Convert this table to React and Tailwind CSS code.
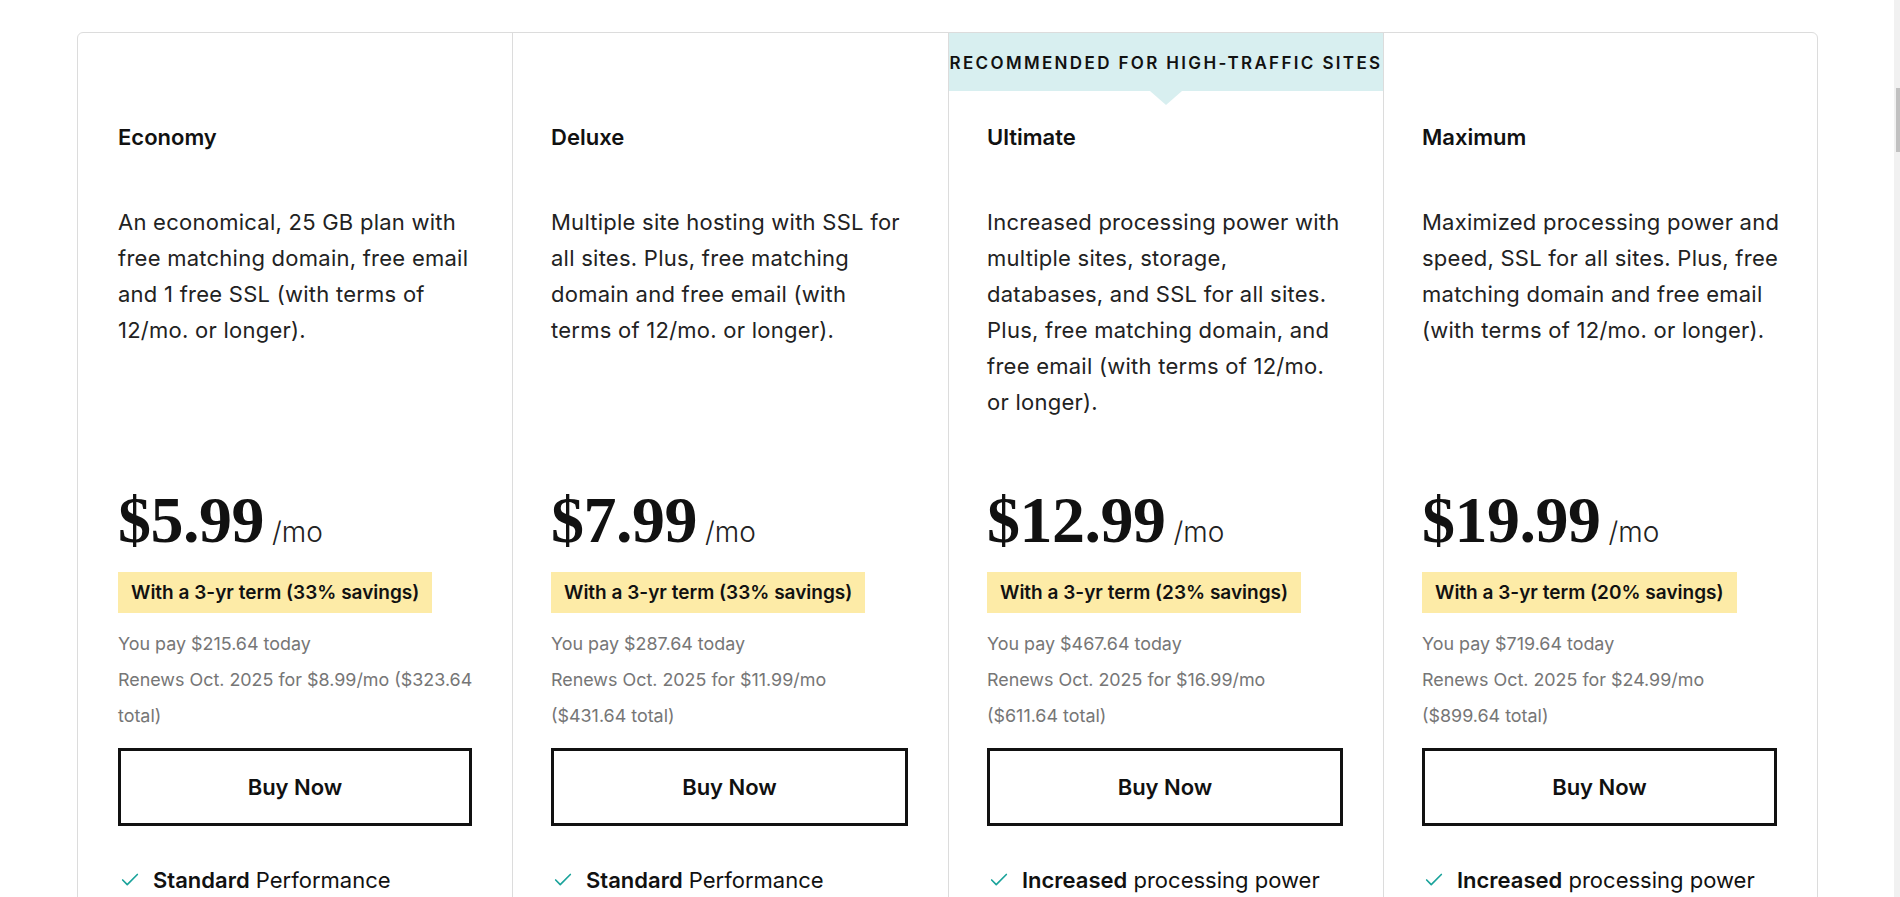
import React from "react";
import { Check } from "lucide-react";

const plans = [
  {
    name: "Economy",
    desc: ["An economical, 25 GB plan with", "free matching domain, free email", "and 1 free SSL (with terms of", "12/mo. or longer)."],
    price: "$5.99",
    savings: "With a 3-yr term (33% savings)",
    pay: "You pay $215.64 today",
    renew: ["Renews Oct. 2025 for $8.99/mo ($323.64", "total)"],
    featBold: "Standard",
    feat: "Performance",
  },
  {
    name: "Deluxe",
    desc: ["Multiple site hosting with SSL for", "all sites. Plus, free matching", "domain and free email (with", "terms of 12/mo. or longer)."],
    price: "$7.99",
    savings: "With a 3-yr term (33% savings)",
    pay: "You pay $287.64 today",
    renew: ["Renews Oct. 2025 for $11.99/mo", "($431.64 total)"],
    featBold: "Standard",
    feat: "Performance",
  },
  {
    name: "Ultimate",
    recommended: true,
    desc: ["Increased processing power with", "multiple sites, storage,", "databases, and SSL for all sites.", "Plus, free matching domain, and", "free email (with terms of 12/mo.", "or longer)."],
    price: "$12.99",
    savings: "With a 3-yr term (23% savings)",
    pay: "You pay $467.64 today",
    renew: ["Renews Oct. 2025 for $16.99/mo", "($611.64 total)"],
    featBold: "Increased",
    feat: "processing power",
  },
  {
    name: "Maximum",
    desc: ["Maximized processing power and", "speed, SSL for all sites. Plus, free", "matching domain and free email", "(with terms of 12/mo. or longer)."],
    price: "$19.99",
    savings: "With a 3-yr term (20% savings)",
    pay: "You pay $719.64 today",
    renew: ["Renews Oct. 2025 for $24.99/mo", "($899.64 total)"],
    featBold: "Increased",
    feat: "processing power",
  },
];

const sans = "font-['Inter','Noto_Sans',sans-serif]";

function Column({ plan, first }) {
  return (
    <div className={`min-w-0 flex flex-col ${first ? "" : "border-l border-[#dcdcdc]"}`}>
      <div className="relative h-[58px]">
        {plan.recommended && (
          <>
            <div className="h-full bg-[#d8eff0] flex items-center justify-center pt-[3px] text-[17px] font-semibold tracking-[2.35px] text-[#111] whitespace-nowrap overflow-visible">
              RECOMMENDED FOR HIGH-TRAFFIC SITES
            </div>
            <div className="absolute left-1/2 -translate-x-1/2 top-full w-0 h-0 border-l-[16px] border-r-[16px] border-t-[14px] border-l-transparent border-r-transparent border-t-[#d8eff0]" />
          </>
        )}
      </div>
      <div className={`${first ? "pl-10" : "pl-[38px]"} pr-10 flex flex-col`}>
        <div className="mt-[32px] text-[22px] leading-[28px] font-semibold text-[#111]">{plan.name}</div>
        <div className="mt-[53px] h-[216px] text-[22px] leading-[36px] tracking-[0.25px] text-[#222]">
          {plan.desc.map((l, i) => (
            <div key={i} className="whitespace-nowrap">{l}</div>
          ))}
        </div>
        <div className="mt-[68px] flex items-baseline gap-[8px]">
          <span className="font-['Liberation_Serif',serif] font-bold text-[66px] leading-[64px] tracking-[-0.5px] text-[#111]">{plan.price}</span>
          <span className="text-[28px] font-light text-[#222]">/mo</span>
        </div>
        <div className="mt-[19px] self-start bg-[#fdeba7] px-[13px] py-[6px] text-[19px] leading-[29px] font-semibold text-[#111] whitespace-nowrap">
          {plan.savings}
        </div>
        <div className="mt-[13px] text-[17.9px] leading-[36px] text-[#767676]">
          <div className="whitespace-nowrap">{plan.pay}</div>
          {plan.renew.map((l, i) => (
            <div key={i} className="whitespace-nowrap">{l}</div>
          ))}
        </div>
        <button className="mt-[14px] h-[78px] w-full border-[3px] border-[#111] bg-white text-[22px] font-semibold text-[#111]">
          Buy Now
        </button>
        <div className="mt-[36px] flex items-center gap-[12px] text-[22px] leading-[36px] text-[#111] whitespace-nowrap">
          <Check size={22} strokeWidth={1.8} className="ml-[1px] text-[#1aa39b]" />
          <span>
            <span className="font-semibold">{plan.featBold}</span> {plan.feat}
          </span>
        </div>
      </div>
    </div>
  );
}

export default function App() {
  return (
    <div className={`flex h-screen overflow-hidden bg-white ${sans}`}>
      <main className="flex-1 pt-8">
        <div className="ml-[77px] w-[1741px] border border-[#dcdcdc] rounded-t-md grid grid-cols-[434px_436px_435px_1fr]">
          {plans.map((p, i) => (
            <Column key={p.name} plan={p} first={i === 0} />
          ))}
        </div>
      </main>
      <div className="w-[6px] bg-[#f1f1f1] flex flex-col items-end pt-[88px]">
        <div className="w-[4px] h-[64px] bg-[#c1c1c1]" />
      </div>
    </div>
  );
}
